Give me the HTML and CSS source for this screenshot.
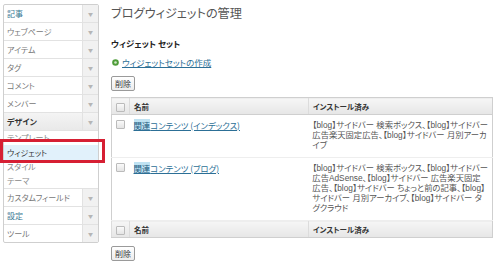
FILE: index.html
```html
<!DOCTYPE html>
<html lang="ja">
<head>
    <meta charset="UTF-8">
    <title>ブログウィジェットの管理</title>
    <link rel="stylesheet" href="styles.css">
</head>
<body>
<!-- Left menu -->
<div class="sidebar">
    <div class="nav-item"><span class="nav-label accent">記事</span><span class="nav-arrow">▼</span></div>
    <div class="nav-item"><span class="nav-label">ウェブページ</span><span class="nav-arrow">▼</span></div>
    <div class="nav-item"><span class="nav-label">アイテム</span><span class="nav-arrow">▼</span></div>
    <div class="nav-item"><span class="nav-label">タグ</span><span class="nav-arrow">▼</span></div>
    <div class="nav-item"><span class="nav-label">コメント</span><span class="nav-arrow">▼</span></div>
    <div class="nav-item"><span class="nav-label">メンバー</span><span class="nav-arrow">▼</span></div>
    <div class="nav-item open"><span class="nav-label">デザイン</span><span class="nav-arrow">▼</span></div>
    <div class="sub-menu">
        <div class="sub-item">テンプレート</div>
        <div class="sub-item current">ウィジェット</div>
        <div class="sub-item">スタイル</div>
        <div class="sub-item">テーマ</div>
    </div>
    <div class="nav-item"><span class="nav-label">カスタムフィールド</span><span class="nav-arrow">▼</span></div>
    <div class="nav-item"><span class="nav-label accent">設定</span><span class="nav-arrow">▼</span></div>
    <div class="nav-item"><span class="nav-label">ツール</span><span class="nav-arrow">▼</span></div>
</div>

<!-- Main -->
<div class="main">
    <h1 class="page-title">ブログウィジェットの管理</h1>
    <h2 class="section-title">ウィジェット セット</h2>
    <div class="create-link">
        <svg class="bullet" width="7" height="7" viewBox="0 0 7 7"><circle cx="3.5" cy="3.5" r="3.3" fill="#4f9d3a"/><circle cx="3.5" cy="3.5" r="1.3" fill="#cfe6c6"/></svg>
        <a href="#">ウィジェットセットの作成</a>
    </div>
    <button class="btn">削除</button>

    <table class="list">
        <thead>
        <tr>
            <th class="col-check"><span class="cb"></span></th>
            <th class="col-name">名前</th>
            <th class="col-installed">インストール済み</th>
        </tr>
        </thead>
        <tbody>
        <tr>
            <td class="col-check"><span class="cb"></span></td>
            <td class="col-name"><a href="#"><span class="hl">関連</span>コンテンツ (インデックス)</a></td>
            <td class="col-installed">【blog】サイドバー 検索ボックス、【blog】サイドバー<br>広告楽天固定広告、【blog】サイドバー 月別アーカ<br>イブ</td>
        </tr>
        <tr>
            <td class="col-check"><span class="cb"></span></td>
            <td class="col-name"><a href="#"><span class="hl">関連</span>コンテンツ (ブログ)</a></td>
            <td class="col-installed">【blog】サイドバー 検索ボックス、【blog】サイドバー<br>広告AdSense、【blog】サイドバー 広告楽天固定<br>広告、【blog】サイドバー ちょっと前の記事、【blog】<br>サイドバー 月別アーカイブ、【blog】サイドバー タ<br>グクラウド</td>
        </tr>
        </tbody>
        <tfoot>
        <tr>
            <th class="col-check"><span class="cb"></span></th>
            <th class="col-name">名前</th>
            <th class="col-installed">インストール済み</th>
        </tr>
        </tfoot>
    </table>
    <button class="btn">削除</button>
</div>
</body>
</html>
```

FILE: styles.css
```css
:root {
    --border: #cfcfcf;
    --line: #e2e2e2;
    --text: #666;
    --link: #2c6f96;
    --accent: #3c7a95;
    --marker: #d61f33;
}

body {
    margin: 0;
    display: flex;
    align-items: flex-start;
    background: #fff;
    font-family: "Noto Sans CJK JP", "Noto Sans", sans-serif;
    font-feature-settings: "palt";
    color: var(--text);
    font-size: 8px;
}

/* Sidebar */
.sidebar {
    width: 94px;
    margin: 4px 0 0 3px;
    border: 1px solid var(--border);
    border-radius: 2px;
}

.nav-item {
    display: flex;
    height: 17px;
    border-bottom: 1px solid var(--line);
}

.nav-item:last-child {
    border-bottom: none;
}

.nav-label {
    flex: 1;
    display: flex;
    align-items: center;
    padding-left: 3px;
    font-size: 8px;
    color: #777;
}

.nav-label.accent {
    color: var(--accent);
}

.nav-arrow {
    width: 15px;
    display: flex;
    align-items: center;
    justify-content: center;
    background: #f1f1f1;
    border-left: 1px solid var(--line);
    color: #b5b5b5;
    font-size: 5px;
}

.nav-item.open {
    background: linear-gradient(#f4f4f4, #e9e9e9);
}

.nav-item.open .nav-label {
    color: #333;
    font-weight: bold;
}

.nav-item.open .nav-arrow {
    background: transparent;
}

.sub-menu {
    border-bottom: 1px solid var(--line);
}

.sub-item {
    height: 14px;
    line-height: 14px;
    padding-left: 3px;
    font-size: 8px;
    color: #888;
}

.sub-item.current {
    position: relative;
    height: 15px;
    line-height: 15px;
    background: #e1f1fb;
    color: #333;
}

/* red annotation frame */
.sub-item.current::after {
    content: '';
    position: absolute;
    top: -6px;
    bottom: -3px;
    left: -4px;
    right: -7px;
    border: 3px solid var(--marker);
}

/* Main area */
.main {
    flex: 1;
    margin-left: 12px;
    margin-right: 7px;
}

.page-title {
    margin: 4px 0 0;
    font-size: 12.2px;
    line-height: 18px;
    font-weight: normal;
    color: #555;
}

.section-title {
    margin: 15px 0 0;
    font-size: 8.5px;
    line-height: 12px;
    color: #222;
}

.create-link {
    display: flex;
    align-items: center;
    gap: 3px;
    margin-top: 7px;
    height: 12px;
    padding-left: 1px;
}

a {
    color: var(--link);
    font-size: 8.5px;
}

.list a {
    font-size: 8.4px;
}

.hl {
    background: #bfe2f2;
    color: #1d5a80;
}

.btn {
    display: block;
    margin-top: 8px;
    height: 15px;
    padding: 0 3px;
    border: 1px solid #9a9a9a;
    border-radius: 2px;
    background: linear-gradient(#fff, #ececec);
    font-family: inherit;
    font-size: 8px;
    color: #333;
}

/* Widget set table */
.list {
    width: 100%;
    margin-top: 6px;
    border-collapse: collapse;
    border: 1px solid var(--border);
}

.list th {
    height: 16px;
    padding: 0 4px;
    text-align: left;
    font-size: 7.5px;
    color: #333;
    background: linear-gradient(#f6f6f6, #e6e6e6);
    border-top: 1px solid var(--border);
    border-bottom: 1px solid var(--border);
    border-left: 1px solid #dcdcdc;
}

.list td {
    padding: 5px 4px 7px;
    line-height: 10px;
    vertical-align: top;
    border-bottom: 1px solid #eee;
}

.col-check {
    width: 9px;
}

.list .col-name {
    width: 181px;
}

.list td.col-installed {
    white-space: nowrap;
    color: #555;
    font-family: "Liberation Sans", "Noto Sans CJK JP", sans-serif;
    font-size: 8.3px;
}

.cb {
    display: inline-block;
    width: 7px;
    height: 7px;
    border: 1px solid #bbb;
    border-radius: 1px;
    background: linear-gradient(#fafafa, #e4e4e4);
    vertical-align: middle;
}

.list td .cb {
    vertical-align: -1px;
}
```
